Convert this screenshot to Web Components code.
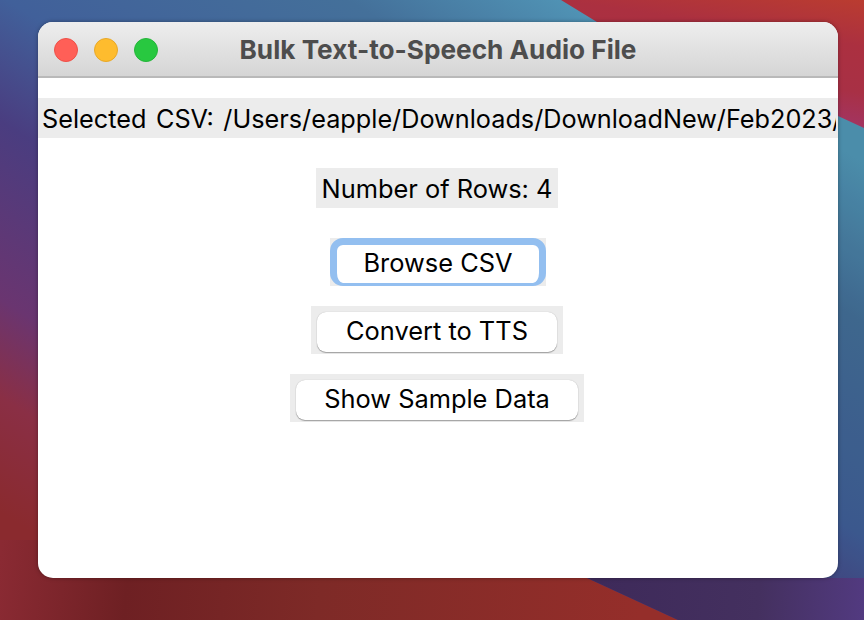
<!DOCTYPE html>
<html>
<head>
<meta charset="utf-8">
<title>Bulk Text-to-Speech Audio File</title>
<style>
  html, body { margin: 0; padding: 0; height: 100%; overflow: hidden; }
</style>
</head>
<body>
<desk-top>
  <app-window title="Bulk Text-to-Speech Audio File">
    <tk-label wide>Selected CSV: /Users/eapple/Downloads/DownloadNew/Feb2023/</tk-label>
    <tk-label>Number of Rows: 4</tk-label>
    <tk-button focused>Browse CSV</tk-button>
    <tk-button style="--pad: 29px">Convert to TTS</tk-button>
    <tk-button>Show Sample Data</tk-button>
  </app-window>
</desk-top>

<script>
(function() {
    const deskTemplate = document.createElement('template');
    deskTemplate.innerHTML = `
        <style>
          :host {
            display: block;
            position: relative;
            width: 864px;
            height: 620px;
            box-sizing: border-box;
            padding: 22px 26px 42px 38px;
            overflow: hidden;
            font-family: Inter, "Liberation Sans", sans-serif;
          }
          svg { position: absolute; left: 0; top: 0; }
          ::slotted(*) { position: relative; }
        </style>
        <svg width="864" height="620" viewBox="0 0 864 620">
          <defs>
            <linearGradient id="base" gradientUnits="userSpaceOnUse" x1="700" y1="60" x2="300" y2="700">
              <stop offset="0" stop-color="#5299b9"/>
              <stop offset=".18" stop-color="#44709a"/>
              <stop offset=".42" stop-color="#41609a"/>
              <stop offset=".56" stop-color="#4a3d80"/>
              <stop offset=".76" stop-color="#6a3570"/>
              <stop offset=".87" stop-color="#8a2f45"/>
              <stop offset="1" stop-color="#8a2a2e"/>
            </linearGradient>
            <linearGradient id="red" gradientUnits="userSpaceOnUse" x1="864" y1="0" x2="844" y2="130">
              <stop offset="0" stop-color="#ba3c30"/>
              <stop offset=".35" stop-color="#ab3040"/>
              <stop offset=".7" stop-color="#a83045"/>
              <stop offset="1" stop-color="#a23565"/>
            </linearGradient>
            <linearGradient id="floor" gradientUnits="userSpaceOnUse" x1="0" y1="560" x2="640" y2="620">
              <stop offset="0" stop-color="#8a2a33"/>
              <stop offset=".2" stop-color="#6e2023"/>
              <stop offset=".5" stop-color="#7e2a27"/>
              <stop offset="1" stop-color="#952e2a"/>
            </linearGradient>
            <linearGradient id="plum" gradientUnits="userSpaceOnUse" x1="600" y1="590" x2="864" y2="610">
              <stop offset="0" stop-color="#3e2a5a"/>
              <stop offset=".6" stop-color="#44305f"/>
              <stop offset="1" stop-color="#523a80"/>
            </linearGradient>
          </defs>
          <rect width="864" height="620" fill="url(#base)"/>
          <rect x="700" width="164" height="620" fill="#000" opacity=".08"/>
          <path d="M561 0 L597 22 L700 70 L838 116 L864 128 L864 0 Z" fill="url(#red)"/>
          <path d="M0 540 L540 540 L587 578 L678 620 L0 620 Z" fill="url(#floor)"/>
          <path d="M587 578 L678 620 L864 620 L864 578 Z" fill="url(#plum)"/>
        </svg>
        <slot></slot>
    `;

    class DeskTop extends HTMLElement {
        constructor() {
            super();
            this.attachShadow({ mode: 'open' });
            this.shadowRoot.appendChild(deskTemplate.content.cloneNode(true));
        }
    }

    const windowTemplate = document.createElement('template');
    windowTemplate.innerHTML = `
        <style>
          :host {
            display: flex;
            flex-direction: column;
            height: 100%;
            border-radius: 15px;
            overflow: hidden;
            background: #fff;
            box-shadow: 0 0 4px rgba(0, 0, 0, .35);
          }
          header {
            flex: none;
            height: 54px;
            display: flex;
            align-items: center;
            position: relative;
            background: linear-gradient(#eeeeee, #d5d5d5);
            border-bottom: 2px solid #b9b9b9;
          }
          .lights {
            display: flex;
            gap: 16px;
            margin-left: 16px;
            margin-top: 2px;
          }
          .lights i {
            width: 24px;
            height: 24px;
            box-sizing: border-box;
            border-radius: 50%;
            border: 1px solid;
          }
          .lights .close { background: #ff5f57; border-color: #ee5048; }
          .lights .min { background: #febc2e; border-color: #e8a828; }
          .lights .max { background: #28c840; border-color: #24b53a; }
          h1 {
            position: absolute;
            left: 0;
            right: 0;
            top: 0;
            bottom: 0;
            margin: 0;
            display: flex;
            align-items: center;
            justify-content: center;
            font-size: 26.2px;
            font-weight: 700;
            color: #4d4d4d;
          }
          main {
            flex: 1;
            min-height: 0;
            display: flex;
            flex-direction: column;
            align-items: center;
            gap: 20px;
            padding: 20px 2px 0 0;
          }
        </style>
        <header>
          <div class="lights"><i class="close"></i><i class="min"></i><i class="max"></i></div>
          <h1></h1>
        </header>
        <main><slot></slot></main>
    `;

    class AppWindow extends HTMLElement {
        constructor() {
            super();
            this.attachShadow({ mode: 'open' });
            this.shadowRoot.appendChild(windowTemplate.content.cloneNode(true));
            this.shadowRoot.querySelector('h1').textContent = this.getAttribute('title');
        }
    }

    const labelTemplate = document.createElement('template');
    labelTemplate.innerHTML = `
        <style>
          :host {
            display: block;
            box-sizing: border-box;
            height: 40px;
            padding: 0 6px;
            margin-bottom: 10px;
            background: #ececec;
            color: #000;
            font-size: 25.4px;
            white-space: nowrap;
          }
          :host([wide]) {
            align-self: stretch;
            margin-right: -2px;
            padding: 0 2px 0 4px;
            font-size: 25.25px;
            word-spacing: 2.5px;
          }
          div { overflow: hidden; height: 40px; line-height: 42px; }
        </style>
        <div><slot></slot></div>
    `;

    class TkLabel extends HTMLElement {
        constructor() {
            super();
            this.attachShadow({ mode: 'open' });
            this.shadowRoot.appendChild(labelTemplate.content.cloneNode(true));
        }
    }

    const buttonTemplate = document.createElement('template');
    buttonTemplate.innerHTML = `
        <style>
          :host {
            display: block;
            box-sizing: border-box;
            height: 48px;
            padding: 6px;
            background: #ececec;
            color: #000;
            font-size: 25.4px;
          }
          div {
            box-sizing: border-box;
            height: 40px;
            line-height: 38px;
            padding: 0 var(--pad, 28px);
            background: #fff;
            border-radius: 9px;
            white-space: nowrap;
            box-shadow: 0 0 1px rgba(0, 0, 0, .25), 0 1px 1px rgba(0, 0, 0, .3);
          }
          :host([focused]) {
            padding: 0;
            margin-left: 2px;
          }
          :host([focused]) div {
            height: 48px;
            line-height: 36px;
            padding: 0 26.5px;
            border: solid #93bff0;
            border-width: 7px 7px 3px;
            border-radius: 13px;
            box-shadow: none;
          }
        </style>
        <div><slot></slot></div>
    `;

    class TkButton extends HTMLElement {
        constructor() {
            super();
            this.attachShadow({ mode: 'open' });
            this.shadowRoot.appendChild(buttonTemplate.content.cloneNode(true));
        }
    }

    customElements.define('desk-top', DeskTop);
    customElements.define('app-window', AppWindow);
    customElements.define('tk-label', TkLabel);
    customElements.define('tk-button', TkButton);
})();
</script>
</body>
</html>
